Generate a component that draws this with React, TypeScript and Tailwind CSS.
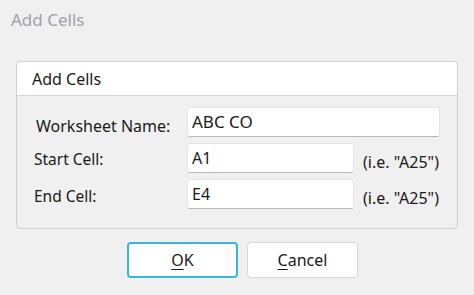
export default function App() {
  return (
    <div
      className="w-[474px] h-[295px] bg-[#f0f0f0] text-[#1a1a1a] overflow-hidden"
      style={{ fontFamily: '"Noto Sans", "Open Sans", sans-serif' }}
    >
      <div className="h-[61px] pl-[11px] pt-[7px] text-[17px] text-[#a0a0a8]">Add Cells</div>

      {/* group box */}
      <div className="ml-[16px] w-[442px] h-[168px] border border-[#cfcfcf] rounded-[4px] bg-[#f0f0f0]">
        <div className="h-[34px] bg-white border-b border-[#d4d4d4] rounded-t-[4px] pl-[15px] flex items-center text-[16px]">
          Add Cells
        </div>
        <div className="pt-[11px] flex flex-col gap-[6px]">
          <div className="flex items-center h-[30px]">
            <div className="w-[170px] pl-[19px] pt-[7px] text-[16px]">Worksheet Name:</div>
            <div className="w-[253px] h-[30px] bg-white rounded-[3px] border border-[#e4e4e4] border-b-[#b8b8b8] px-[4px] flex items-center text-[17px]">
              ABC CO
            </div>
          </div>
          <div className="flex items-center h-[30px]">
            <div className="w-[170px] pl-[17px] pt-[4px] text-[15.5px]">Start Cell:</div>
            <div className="w-[167px] h-[30px] bg-white rounded-[3px] border border-[#e4e4e4] border-b-[#b8b8b8] px-[4px] flex items-center text-[16px]">
              A1
            </div>
            <div className="pl-[9px] pt-[8px] text-[16px]">(i.e. "A25")</div>
          </div>
          <div className="flex items-center h-[30px]">
            <div className="w-[170px] pl-[17px] pt-[6px] text-[15.5px]">End Cell:</div>
            <div className="w-[167px] h-[30px] bg-white rounded-[3px] border border-[#e4e4e4] border-b-[#b8b8b8] px-[4px] flex items-center text-[16px]">
              E4
            </div>
            <div className="pl-[9px] pt-[8px] text-[16px]">(i.e. "A25")</div>
          </div>
        </div>
      </div>

      <div className="pt-[13px] pl-[127px] flex gap-[9px]">
        <button className="w-[111px] h-[36px] bg-white rounded-[4px] border-2 border-[#38b7de] text-[16px]">
          <span className="underline underline-offset-[3px]">O</span>K
        </button>
        <button className="w-[111px] h-[36px] bg-white rounded-[4px] border border-[#d8d8d8] text-[16px]">
          <span className="underline underline-offset-[3px]">C</span>ancel
        </button>
      </div>
    </div>
  );
}
